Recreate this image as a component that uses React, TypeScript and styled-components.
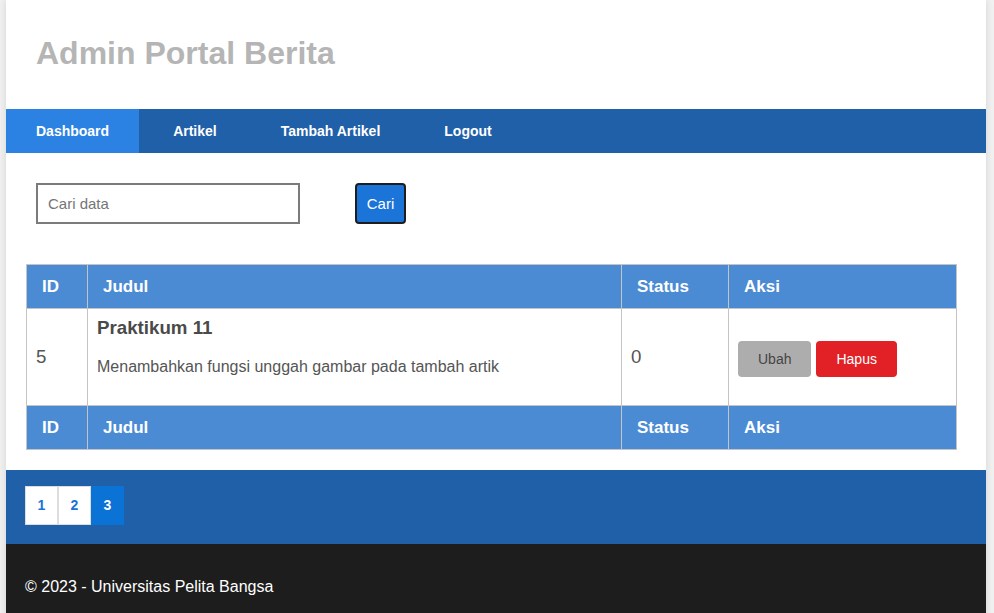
import React from "react";
import styled, { createGlobalStyle } from "styled-components";

const GlobalStyle = createGlobalStyle`
  html, body {
    margin: 0;
    padding: 0;
    background: #f1f1f1;
    font-family: "Liberation Sans", Arial, sans-serif;
  }
  * { box-sizing: border-box; }
`;

const Container = styled.div`
  width: 980px;
  margin: 0 8px 0 6px;
  background: #ffffff;
  box-shadow: 0 0 8px rgba(0, 0, 0, 0.12);
`;

const Header = styled.header`
  padding: 35px 30px 37px;
`;

const Title = styled.h1`
  margin: 0;
  font-size: 32px;
  line-height: 37px;
  font-weight: bold;
  color: #b5b5b5;
`;

const Nav = styled.nav`
  display: flex;
  gap: 4px;
  background: #2060a9;
  height: 44px;
`;

const NavLink = styled.a<{ $active?: boolean }>`
  display: block;
  padding: 0 30px;
  line-height: 44px;
  font-size: 14px;
  font-weight: bold;
  color: #ffffff;
  text-decoration: none;
  background: ${(p) => (p.$active ? "#2b82e3" : "transparent")};
`;

const SearchForm = styled.form`
  display: flex;
  align-items: center;
  gap: 55px;
  padding: 30px 30px 40px;
`;

const SearchInput = styled.input`
  width: 264px;
  height: 41px;
  border: 2px solid #7b7b7b;
  padding: 0 10px;
  font-family: "Liberation Sans", Arial, sans-serif;
  font-size: 15px;
  color: #333;
  outline: none;
  &::placeholder {
    color: #757575;
  }
`;

const SearchButton = styled.button`
  width: 51px;
  height: 41px;
  padding: 0;
  background: #1b74d8;
  border: 2px solid #1e1e1e;
  border-radius: 4px;
  color: #ffffff;
  font-family: "Liberation Sans", Arial, sans-serif;
  font-size: 15px;
`;

const Table = styled.table`
  width: 931px;
  margin: 0 0 20px 20px;
  border-collapse: collapse;
`;

const HeadCell = styled.th<{ $w?: number }>`
  background: #4b8bd4;
  color: #ffffff;
  font-size: 17px;
  line-height: 19px;
  font-weight: bold;
  text-align: left;
  padding: 12px 15px;
  border: 1px solid #c4c4c4;
  width: ${(p) => (p.$w ? `${p.$w}px` : "auto")};
`;

const Cell = styled.td`
  border: 1px solid #c4c4c4;
  padding: 8px 9px;
  vertical-align: middle;
  color: #555555;
`;

const Num = styled.span`
  font-size: 18.7px;
`;

const ArticleTitle = styled.h3`
  margin: 0;
  font-size: 18.72px;
  font-weight: bold;
  color: #4a4a4a;
`;

const ArticleText = styled.p`
  margin: 19px 0 21px;
  font-size: 16px;
  color: #555555;
`;

const ActionButton = styled.a<{ $variant: "edit" | "delete" }>`
  display: inline-block;
  padding: 10px 20px;
  font-size: 14px;
  line-height: 16px;
  border-radius: 4px;
  text-decoration: none;
  background: ${(p) => (p.$variant === "edit" ? "#adadad" : "#e12126")};
  color: ${(p) => (p.$variant === "edit" ? "#444444" : "#ffffff")};
`;

const Actions = styled.div`
  display: flex;
  gap: 5px;
  padding-top: 4px;
`;

const PagerSection = styled.section`
  background: #2060a9;
  padding: 16px 19px 19px;
`;

const Pager = styled.ul`
  display: flex;
  list-style: none;
  margin: 0;
  padding: 0;
`;

const PageLink = styled.a<{ $active?: boolean }>`
  display: block;
  width: 33px;
  height: 39px;
  line-height: 37px;
  text-align: center;
  font-size: 14px;
  font-weight: bold;
  text-decoration: none;
  border: 1px solid ${(p) => (p.$active ? "#0b72d6" : "#dddddd")};
  background: ${(p) => (p.$active ? "#0b72d6" : "#ffffff")};
  color: ${(p) => (p.$active ? "#ffffff" : "#1a73d8")};
`;

const Footer = styled.footer`
  background: #1d1d1d;
  color: #ffffff;
  padding: 34px 19px 40px;
  font-size: 16px;
  line-height: 18px;
`;

const rows = [
  {
    id: 5,
    judul: "Praktikum 11",
    isi: "Menambahkan fungsi unggah gambar pada tambah artik",
    status: 0,
  },
];

export default function App() {
  return (
    <>
      <GlobalStyle />
      <Container>
        <Header>
          <Title>Admin Portal Berita</Title>
        </Header>
        <Nav>
          <NavLink $active>Dashboard</NavLink>
          <NavLink>Artikel</NavLink>
          <NavLink>Tambah Artikel</NavLink>
          <NavLink>Logout</NavLink>
        </Nav>
        <SearchForm onSubmit={(e) => e.preventDefault()}>
          <SearchInput placeholder="Cari data" />
          <SearchButton type="submit">Cari</SearchButton>
        </SearchForm>
        <Table>
          <thead>
            <tr>
              <HeadCell $w={61}>ID</HeadCell>
              <HeadCell>Judul</HeadCell>
              <HeadCell $w={107}>Status</HeadCell>
              <HeadCell $w={228}>Aksi</HeadCell>
            </tr>
          </thead>
          <tbody>
            {rows.map((r) => (
              <tr key={r.id}>
                <Cell>
                  <Num>{r.id}</Num>
                </Cell>
                <Cell>
                  <ArticleTitle>{r.judul}</ArticleTitle>
                  <ArticleText>{r.isi}</ArticleText>
                </Cell>
                <Cell>
                  <Num>{r.status}</Num>
                </Cell>
                <Cell>
                  <Actions>
                    <ActionButton $variant="edit">Ubah</ActionButton>
                    <ActionButton $variant="delete">Hapus</ActionButton>
                  </Actions>
                </Cell>
              </tr>
            ))}
          </tbody>
          <tfoot>
            <tr>
              <HeadCell>ID</HeadCell>
              <HeadCell>Judul</HeadCell>
              <HeadCell>Status</HeadCell>
              <HeadCell>Aksi</HeadCell>
            </tr>
          </tfoot>
        </Table>
        <PagerSection>
          <Pager>
            <li>
              <PageLink>1</PageLink>
            </li>
            <li>
              <PageLink>2</PageLink>
            </li>
            <li>
              <PageLink $active>3</PageLink>
            </li>
          </Pager>
        </PagerSection>
        <Footer>© 2023 - Universitas Pelita Bangsa</Footer>
      </Container>
    </>
  );
}
